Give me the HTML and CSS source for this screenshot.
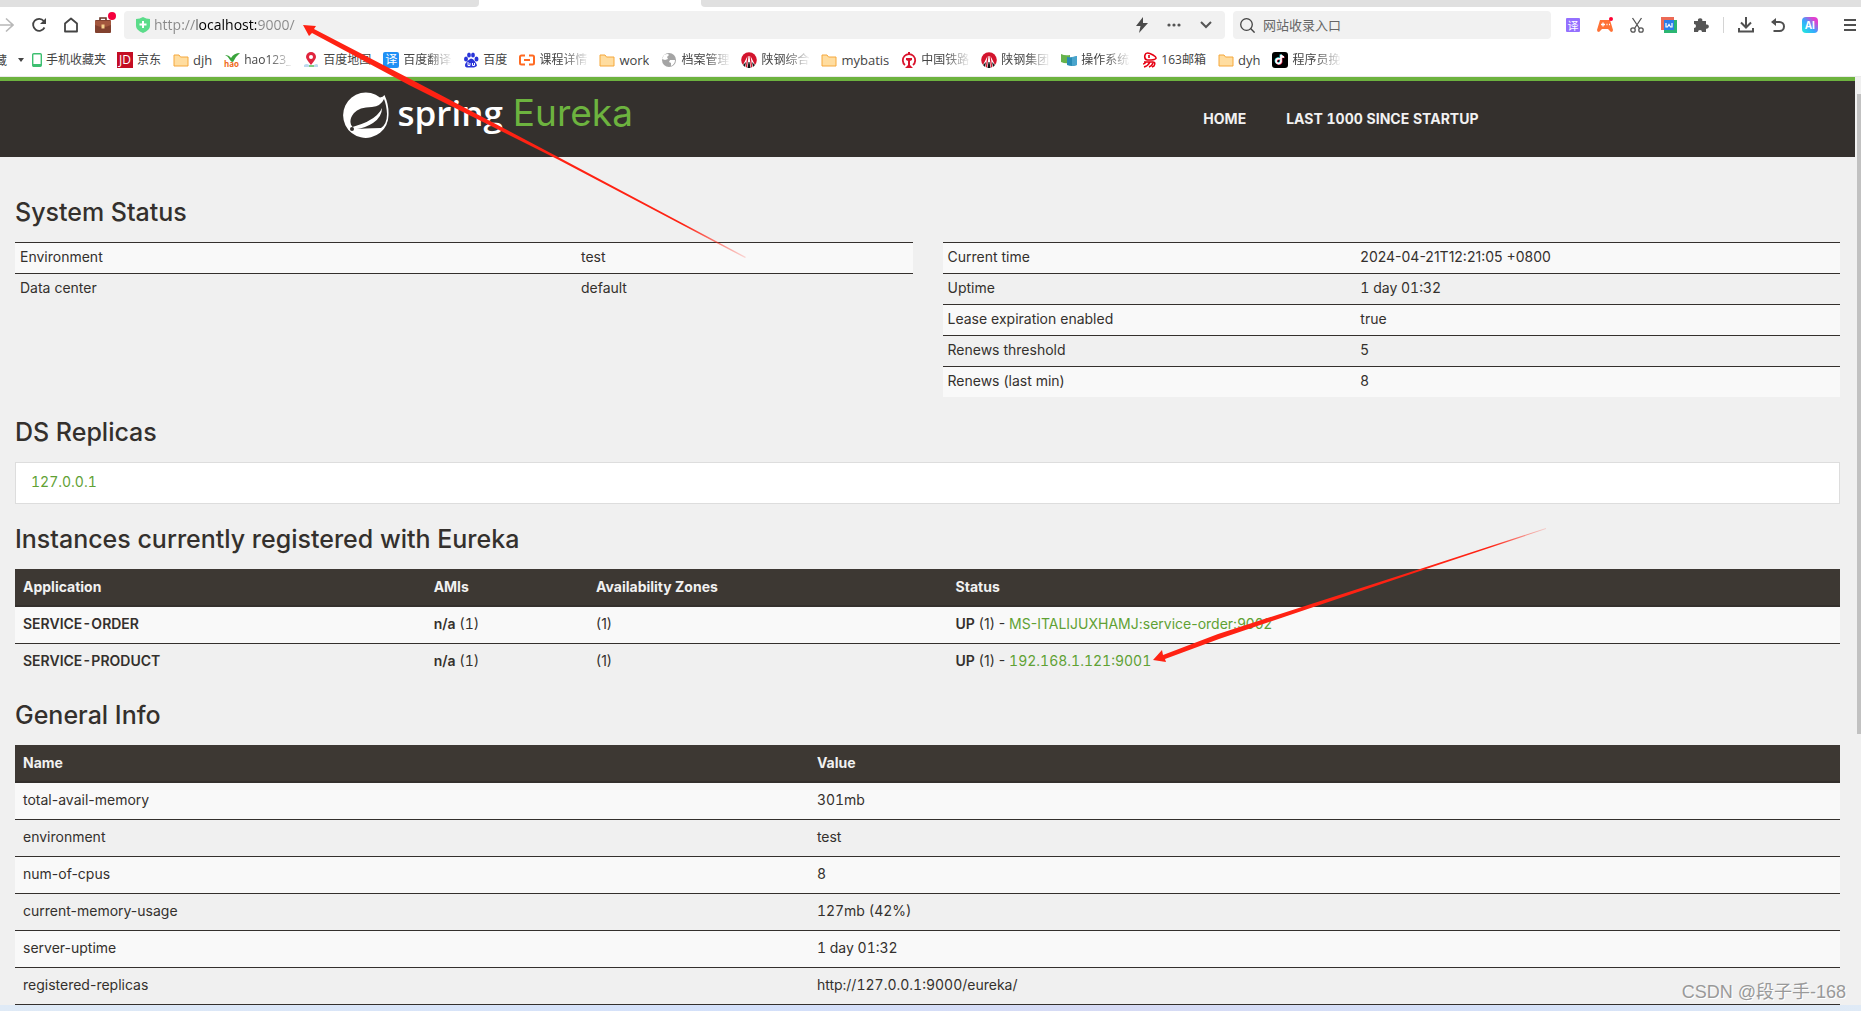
FILE: index.html
```html
<!DOCTYPE html>
<html lang="zh-CN">
<head>
<meta charset="utf-8">
<title>Eureka</title>
<link rel="stylesheet" href="styles.css">
</head>
<body>
<header class="browser">
  <div class="tabs"><span class="tab tab-left"></span><span class="tab tab-active"></span><span class="tab tab-right"></span></div>
  <div class="toolbar">
    <div class="nav-buttons">
      <button class="tool forward" aria-label="Forward"><svg width="14" height="16" viewBox="0 0 14 16"><path d="M0 8h13M6 1.500l7 6.500-7 6.500" fill="none" stroke="#b8b8b8" stroke-width="1.600"/></svg></button>
      <button class="tool" aria-label="Reload"><svg width="16" height="16" viewBox="0 0 16 16"><path d="M13.500 10.500A6 6 0 1 1 12.800 4" fill="none" stroke="#444" stroke-width="1.800"/><path d="M15 1v6H9z" fill="#444"/></svg></button>
      <button class="tool" aria-label="Home"><svg width="16" height="16" viewBox="0 0 16 16"><path d="M2 6.500L8 1.500l6 5v8H2z" fill="none" stroke="#444" stroke-width="1.800" stroke-linejoin="round"/></svg></button>
      <button class="tool badge" aria-label="Toolbox"><svg width="16" height="16" viewBox="0 0 16 16"><path d="M5 4V1h6v3" fill="none" stroke="#693527" stroke-width="1.600"/><rect y="3" width="16" height="13" rx="1" fill="#82412f"/><path d="M0 4h16v4q-8 4-16 0z" fill="#a3573e"/><rect x="6.500" y="7.500" width="3" height="4" fill="#f6d08c"/></svg></button>
    </div>
    <form class="address">
      <svg width="14" height="16" viewBox="0 0 14 16"><path d="M0 2q4 0 7-2 3 2 7 2v7q0 4-7 7-7-3-7-7z" fill="#5bdc8a"/><path d="M7 4v7M3.500 7.500h7" stroke="#fff" stroke-width="2"/></svg>
      <input class="url" type="text" aria-label="Address" value="http://localhost:9000/">
      <button class="tool" type="button" aria-label="Speed mode"><svg width="14" height="16" viewBox="0 0 14 16"><path d="M8 0L1 9h4.500L4 16l9-10H8z" fill="#4a4a4a"/></svg></button>
      <button class="tool" type="button" aria-label="More"><svg width="14" height="4" viewBox="0 0 14 4"><g fill="#555"><circle cx="2" cy="2" r="1.600"/><circle cx="7" cy="2" r="1.600"/><circle cx="12" cy="2" r="1.600"/></g></svg></button>
      <button class="tool" type="button" aria-label="History"><svg width="12" height="8" viewBox="0 0 12 8"><path d="M1 1l5 5 5-5" fill="none" stroke="#555" stroke-width="2"/></svg></button>
    </form>
    <form class="search">
      <svg width="15" height="15" viewBox="0 0 15 15"><circle cx="6.500" cy="6.500" r="5.800" fill="none" stroke="#444" stroke-width="1.300"/><path d="M10.600 10.600l4 4" stroke="#444" stroke-width="1.400"/></svg>
      <input class="query" type="text" aria-label="Search" placeholder="网站收录入口">
    </form>
    <div class="extensions">
      <button class="tool" aria-label="Translate"><span class="ext-translate">译</span></button>
      <button class="tool" aria-label="Games"><svg width="16" height="16" viewBox="0 0 16 16"><path d="M3 3h10l3 10q0 2-2 2l-3-3H5l-3 3q-2 0-2-2z" fill="#ff7236"/><path d="M4 7.500h4M6 5.500v4M9.500 7.500h1M12 7.500h1" stroke="#fff" stroke-width="1.300"/><circle cx="14" cy="2" r="2" fill="#f03"/></svg></button>
      <button class="tool" aria-label="Screenshot"><svg width="14" height="16" viewBox="0 0 14 16"><g fill="none" stroke="#555" stroke-width="1.300"><path d="M2.500 1l7 10.500M11.500 1l-7 10.500"/><circle cx="3" cy="13" r="2.200"/><circle cx="11" cy="13" r="2.200"/></g></svg></button>
      <button class="tool" aria-label="Documents"><svg width="16" height="16" viewBox="0 0 16 16"><path d="M0 0h13v13H0z" fill="#ec6a55"/><path d="M3 3h13v13H3z" fill="#2bb673"/><path d="M3 3h10v10H3z" fill="#2b7de9"/><path d="M5 6v4h1.500L8 7.500 9.500 10H11V6" fill="none" stroke="#fff" stroke-width="1.200"/></svg></button>
      <button class="tool" aria-label="Extensions"><svg width="16" height="16" viewBox="0 0 16 16"><path d="M1 4h4a2.200 2.200 0 1 1 4.300 0H13v3.500a2.200 2.200 0 1 1 0 4.200V15H9a2 2 0 1 0-4 0H1v-4a2 2 0 1 0 0-4z" fill="#555"/></svg></button>
      <span class="divider"></span>
      <button class="tool" aria-label="Downloads"><svg width="16" height="16" viewBox="0 0 16 16"><path d="M8 0v10M3 5.500l5 5 5-5M1 11v3.500h14V11" fill="none" stroke="#505050" stroke-width="2"/></svg></button>
      <button class="tool" aria-label="Undo"><svg width="14" height="14" viewBox="0 0 14 14"><path d="M1 4h7.500a4.300 4.300 0 0 1 0 9H2.500" fill="none" stroke="#505050" stroke-width="2"/><path d="M0 4l5-4v8z" fill="#505050"/></svg></button>
      <button class="tool" aria-label="AI assistant"><span class="ext-ai">AI</span></button>
      <button class="tool menu" aria-label="Menu"><svg width="12" height="12" viewBox="0 0 12 12"><path d="M0 1h12M0 6h12M0 11h12" stroke="#505050" stroke-width="2"/></svg></button>
    </div>
  </div>
  <nav class="bookmarks">
    <button class="favorites"><span class="favorites-label">藏</span><svg width="6" height="4" viewBox="0 0 6 4"><path d="M0 0h6L3 4z" fill="#444"/></svg></button>
    <a class="mark phone" href="#"><svg width="10" height="14" viewBox="0 0 10 14"><rect x=".7" y=".7" width="8.600" height="12.600" rx="1" fill="none" stroke="#3dbf70" stroke-width="1.400"/><path d="M1 11h8v2H1z" fill="#3dbf70"/></svg><span class="name wide">手机收藏夹</span></a>
    <a class="mark" href="#"><span class="ico jd">JD</span><span class="name">京东</span></a>
    <a class="mark" href="#"><svg class="ico" viewBox="0 0 16 16"><path d="M1 3h5l1.500 2H15v9H1z" fill="#ffdda0" stroke="#f5a83c"/></svg><span class="name latin">djh</span></a>
    <a class="mark" href="#"><svg class="ico" viewBox="0 0 16 16"><path d="M1 3q4 0 6 3 3-5 9-5-5 4-7 9-2 0-3-2-2-4-5-5z" fill="#3aa43c"/><text x="0" y="15" class="hao">hao</text></svg><span class="name fade">hao123_</span></a>
    <a class="mark" href="#"><svg class="ico" viewBox="0 0 16 16"><path d="M1 13q3-2 5 0t5 0 4 0v2H1z" fill="#bcd9ee"/><path d="M6 13h5v2H6z" fill="#7ed087"/><path d="M8 13Q3 7 3 5a5 5 0 0 1 10 0q0 2-5 8z" fill="#e0243d"/><circle cx="8" cy="5" r="2" fill="#fff"/></svg><span class="name">百度地图</span></a>
    <a class="mark" href="#"><span class="ico yi">译</span><span class="name fade">百度翻译</span></a>
    <a class="mark" href="#"><svg class="ico" viewBox="0 0 16 16"><g fill="#2a35d8"><ellipse cx="3" cy="7" rx="2" ry="2.500"/><ellipse cx="6" cy="3" rx="1.900" ry="2.500"/><ellipse cx="10" cy="3" rx="1.900" ry="2.500"/><ellipse cx="13.500" cy="7" rx="2" ry="2.500"/><path d="M8 6.500q2 0 4 3t2 4-3 2H5q-3 0-3-2t2-4 4-3z"/></g><path d="M5 10v3.500h2V11M9.500 11v2.500h2V11" fill="none" stroke="#fff"/></svg><span class="name">百度</span></a>
    <a class="mark" href="#"><svg class="ico" viewBox="0 0 16 16"><path d="M6 3.500H2.500Q1 3.500 1 5v6q0 1.500 1.500 1.500H6M10 3.500h3.500Q15 3.500 15 5v6q0 1.500-1.500 1.500H10M5 8h6" fill="none" stroke="#ff6a22" stroke-width="2"/></svg><span class="name fade">课程详情</span></a>
    <a class="mark" href="#"><svg class="ico" viewBox="0 0 16 16"><path d="M1 3h5l1.500 2H15v9H1z" fill="#ffdda0" stroke="#f5a83c"/></svg><span class="name latin">work</span></a>
    <a class="mark" href="#"><svg class="ico" viewBox="0 0 16 16"><circle cx="8" cy="8" r="7" fill="#a4a4a4"/><path d="M3 3q4-2 5 0L6 5l1 2-3 1-3-1zM9 8h5q0 4-4 6V11l-2-1z" fill="#fff"/></svg><span class="name fade">档案管理</span></a>
    <a class="mark" href="#"><svg class="ico" viewBox="0 0 16 16"><circle cx="8" cy="8" r="7.800" fill="#d3142d"/><path d="M6.500 4L1.500 14l3 2zM9.500 4l5 10-3 2zM7.500 4h1l1.500 12H6z" fill="#fff"/><path d="M7.500 10h1l1 6h-3zM5 10l-1 5-2-2zM11 10l1 5 2-2z" fill="#161616"/></svg><span class="name fade">陕钢综合</span></a>
    <a class="mark" href="#"><svg class="ico" viewBox="0 0 16 16"><path d="M1 3h5l1.500 2H15v9H1z" fill="#ffdda0" stroke="#f5a83c"/></svg><span class="name latin">mybatis</span></a>
    <a class="mark" href="#"><svg class="ico" viewBox="0 0 16 16"><path d="M4 13A6.200 6.200 0 1 1 12 13" fill="none" stroke="#d9132c" stroke-width="1.800"/><path d="M5 6h6v2L9 9v4l3 3H4l3-3V9L5 8zM7 0h2v2H7z" fill="#d9132c"/></svg><span class="name fade">中国铁路</span></a>
    <a class="mark" href="#"><svg class="ico" viewBox="0 0 16 16"><circle cx="8" cy="8" r="7.800" fill="#d3142d"/><path d="M6.500 4L1.500 14l3 2zM9.500 4l5 10-3 2zM7.500 4h1l1.500 12H6z" fill="#fff"/><path d="M7.500 10h1l1 6h-3zM5 10l-1 5-2-2zM11 10l1 5 2-2z" fill="#161616"/></svg><span class="name fade">陕钢集团</span></a>
    <a class="mark" href="#"><svg class="ico" viewBox="0 0 16 16"><path d="M0 2q4 2 9 1v8q-5 1-9-1z" fill="#67b34b"/><path d="M6 5q5 1 10-1v9q-5 2-10 0z" fill="#278bb5"/><path d="M11 5l5-1v9l-5 1z" fill="#49a4cc"/></svg><span class="name fade">操作系统</span></a>
    <a class="mark" href="#"><svg class="ico" viewBox="0 0 16 16"><g fill="none" stroke="#e60012" stroke-width="1.600"><path d="M6 8Q3 7 4 3t8 0-2 5H6"/><path d="M8 3v3M3 10h9q3 0 1 4l-2 1M9 10q-2 4-6 5M12 11q-1 3-4 4M5 10q-1 2-3 2"/></g></svg><span class="name">163邮箱</span></a>
    <a class="mark" href="#"><svg class="ico" viewBox="0 0 16 16"><path d="M1 3h5l1.500 2H15v9H1z" fill="#ffdda0" stroke="#f5a83c"/></svg><span class="name latin">dyh</span></a>
    <a class="mark" href="#"><svg class="ico" viewBox="0 0 16 16"><rect width="16" height="16" rx="3" fill="#000"/><g fill="none" stroke-width="1.700"><path d="M8 7a2.500 2.500 0 1 0 1 2.500V3q1 2 3 2" stroke="#25e0e8" transform="translate(-.6 -.4)"/><path d="M8 7a2.500 2.500 0 1 0 1 2.500V3q1 2 3 2" stroke="#f03058" transform="translate(.6 .5)"/><path d="M8 7a2.500 2.500 0 1 0 1 2.500V3q1 2 3 2" stroke="#fff"/></g></svg><span class="name fade">程序员挽</span></a>
  </nav>
</header>

<div class="viewport">
  <div class="page">
    <header class="site-header">
      <div class="container">
        <a class="brand" href="#">
          <svg width="46" height="46" viewBox="0 0 46 46"><path d="M41.500 3Q46 13 45.500 23A22.700 22.700 0 1 1 37 5.500Q40 5 41.500 3z" fill="#fff"/><path d="M41 7q-3 7-12 8-13 0-18 6c-5 6-4 11-1.500 14Q27 30 34 23q4-4 5-7 0 9-9 15-8 5-16 6 18-1 24-1 6-4 6-14Q43.500 13 41 7z" fill="#34302d"/><circle cx="9" cy="37" r="2" fill="#34302d"/></svg>
          <span class="brand-spring">spring</span><span class="brand-eureka">Eureka</span>
        </a>
        <nav class="site-nav"><a href="#">HOME</a><a href="#">LAST 1000 SINCE STARTUP</a></nav>
      </div>
    </header>
    <main class="content">
      <h1>System Status</h1>
      <div class="status">
        <table class="compact left-status">
          <tr><td>Environment</td><td>test</td></tr>
          <tr><td>Data center</td><td>default</td></tr>
        </table>
        <table class="compact right-status">
          <tr><td>Current time</td><td>2024-04-21T12:21:05 +0800</td></tr>
          <tr><td>Uptime</td><td class="num">1 day 01:32</td></tr>
          <tr><td>Lease expiration enabled</td><td>true</td></tr>
          <tr><td>Renews threshold</td><td>5</td></tr>
          <tr><td>Renews (last min)</td><td>8</td></tr>
        </table>
      </div>
      <h1>DS Replicas</h1>
      <ul class="replicas"><li><a class="num" href="#">127.0.0.1</a></li></ul>
      <h1>Instances currently registered with Eureka</h1>
      <table class="data instances">
        <thead><tr><th>Application</th><th>AMIs</th><th>Availability Zones</th><th>Status</th></tr></thead>
        <tbody>
          <tr><td class="num"><b>SERVICE-ORDER</b></td><td class="num"><b>n/a</b> (1)</td><td>(1)</td><td><b>UP</b> (1) - <a href="#">MS-ITALIJUXHAMJ:service-order:9002</a></td></tr>
          <tr><td class="num"><b>SERVICE-PRODUCT</b></td><td class="num"><b>n/a</b> (1)</td><td>(1)</td><td><b>UP</b> (1) - <a class="num" href="#">192.168.1.121:9001</a></td></tr>
        </tbody>
      </table>
      <h1>General Info</h1>
      <table class="data general">
        <thead><tr><th>Name</th><th>Value</th></tr></thead>
        <tbody>
          <tr><td>total-avail-memory</td><td class="num">301mb</td></tr>
          <tr><td>environment</td><td>test</td></tr>
          <tr><td>num-of-cpus</td><td class="num">8</td></tr>
          <tr><td>current-memory-usage</td><td class="num">127mb (42%)</td></tr>
          <tr><td>server-uptime</td><td class="num">1 day 01:32</td></tr>
          <tr><td>registered-replicas</td><td class="num">http://127.0.0.1:9000/eureka/</td></tr>
        </tbody>
      </table>
    </main>
  </div>
  <div class="scrollbar"><div class="thumb"></div></div>
</div>
<footer class="taskbar"></footer>

<svg class="arrows" width="1600" height="700" viewBox="0 0 1600 700">
  <defs>
    <linearGradient id="fade1" gradientUnits="userSpaceOnUse" x1="303" y1="25" x2="750" y2="260"><stop offset=".85" stop-color="#ff2213"/><stop offset="1" stop-color="#ff2213" stop-opacity=".1"/></linearGradient>
    <linearGradient id="fade2" gradientUnits="userSpaceOnUse" x1="1153" y1="660" x2="1550" y2="527"><stop offset=".85" stop-color="#ff2213"/><stop offset="1" stop-color="#ff2213" stop-opacity=".1"/></linearGradient>
  </defs>
  <path d="M303 25L316 26 314 29 416 82 560 158 746 257 745 258 559 160 409 85 312 33 309 36z" fill="url(#fade1)"/>
  <path d="M1153 660L1162 650 1163 655 1218 634 1420 569 1546 528 1546 529 1420 571 1219 639 1165 659 1166 662z" fill="url(#fade2)"/>
</svg>
<div class="watermark">CSDN @段子手-168</div>
</body>
</html>
```

FILE: styles.css
```css
* { box-sizing: border-box; }

body {
  margin: 0;
  position: relative;
  overflow-x: hidden;
  background: #f0f0f0;
  color: #34302d;
  font: 14px/20px Inter, "Noto Sans CJK SC", sans-serif;
}

a { color: #5fa134; text-decoration: none; }
svg { display: block; flex: none; }
.num, .site-nav { font-variant-numeric: tabular-nums; }

/* Browser chrome */
.browser {
  background: #fff;
  border-bottom: 1px solid #eaeaea;
}

.tabs { display: flex; height: 7px; }
.tab { background: #e0e0e0; }
.tab-left { width: 479px; border-radius: 0 0 4px 0; }
.tab-active { width: 222px; background: #fff; }
.tab-right { flex: 1; border-radius: 0 0 0 4px; }

.toolbar {
  display: flex;
  align-items: center;
  height: 36px;
}

.nav-buttons, .extensions { display: flex; align-items: center; }
.nav-buttons { margin-right: 5px; }

.tool {
  position: relative;
  display: flex;
  align-items: center;
  justify-content: center;
  width: 32px;
  height: 28px;
  padding: 0;
  border: 0;
  background: none;
}
.tool.forward { width: 23px; justify-content: flex-start; }
.tool.menu { width: 23px; margin-left: 12px; }
.badge::after {
  content: "";
  position: absolute;
  top: 1px;
  right: 3px;
  width: 8px;
  height: 8px;
  border-radius: 50%;
  background: #f5003d;
}

.address, .search {
  display: flex;
  align-items: center;
  height: 28px;
  border-radius: 4px;
  background: #f1f1f1;
}
.address { flex: 1; padding: 0 3px 0 12px; margin-right: 8px; }
.search { width: 318px; padding-left: 7px; gap: 8px; }

.url, .query {
  flex: 1;
  min-width: 0;
  height: 28px;
  border: 0;
  padding: 0;
  outline: 0;
  background: none;
  font: 14px/28px "Open Sans", "Noto Sans CJK SC", sans-serif;
}
.url {
  margin-left: 4px;
  color: transparent;
  caret-color: #000;
  background: linear-gradient(90deg, #888 43px, #000 43px, #000 102px, #888 102px);
  -webkit-background-clip: text;
  background-clip: text;
}
.query { font-size: 13px; }
.query::placeholder { color: #666; opacity: 1; }

.extensions { padding-left: 6px; }
.divider { width: 1px; height: 16px; margin: 0 6px; background: #d4d4d4; }
.ext-translate {
  width: 14px;
  height: 14px;
  border-radius: 1px;
  background: #9470ff;
  color: #fff;
  font: 11px/14px "Noto Sans CJK SC", sans-serif;
}
.ext-ai {
  width: 16px;
  height: 16px;
  border-radius: 4px;
  background: linear-gradient(45deg, #20f0d8, #35a8ff 45%, #e040d0 80%);
  color: #fff;
  font: bold 10px/16px "Open Sans", sans-serif;
}

.bookmarks {
  display: flex;
  align-items: center;
  gap: 12px;
  height: 33px;
  overflow: hidden;
  font: 12px/18px "Open Sans", "Noto Sans CJK SC", sans-serif;
}
.favorites {
  display: flex;
  align-items: center;
  justify-content: flex-end;
  gap: 11px;
  width: 24px;
  margin-right: -4px;
  padding: 0;
  border: 0;
  background: none;
  color: #444;
  font: 12px/18px "Noto Sans CJK SC", sans-serif;
  white-space: nowrap;
}
.mark { display: flex; align-items: center; gap: 4px; color: #444; white-space: nowrap; }
.mark.phone { margin-right: -1px; }
.name { max-width: 49px; overflow: hidden; }
.name.wide { max-width: 60px; }
.name.latin { font-size: 13px; }
.name.fade {
  -webkit-mask-image: linear-gradient(90deg, #000 24px, transparent 50px);
  mask-image: linear-gradient(90deg, #000 24px, transparent 50px);
}
.ico { flex: none; width: 16px; height: 16px; }
.hao { font: bold 8px "Open Sans", sans-serif; fill: #f06a20; }
.jd, .yi { color: #fff; text-align: center; line-height: 16px; }
.jd { background: #c40d23; }
.yi { border-radius: 2px; background: #2090f5; }

/* Eureka page */
.viewport { display: flex; }
.page { flex: 1; min-width: 0; }

.site-header {
  border-top: 4px solid #6db33f;
  background: #34302d;
}
.container {
  display: flex;
  justify-content: space-between;
  max-width: 1170px;
  height: 76px;
  margin: 0 auto;
}
.brand {
  display: flex;
  align-items: center;
  height: 68px;
  line-height: 48px;
}
.brand-spring {
  margin: 0 10px 4px 9px;
  color: #fff;
  font-family: "Open Sans", sans-serif;
  font-size: 35px;
  font-weight: 600;
}
.brand-eureka { margin-bottom: 4px; color: #6db33f; font-size: 37px; font-weight: 400; }
.site-nav {
  display: flex;
  align-items: center;
  gap: 40px;
  padding-right: 34px;
}
.site-nav a { color: #f1f1f1; font-weight: 700; }

.content { padding: 20px 15px 0; }
h1 {
  margin: 22px 0 17px;
  font-size: 25px;
  line-height: 26px;
  font-weight: 500;
}

table { width: 100%; border-collapse: separate; border-spacing: 0; table-layout: fixed; }
th { text-align: left; }
b { font-weight: 600; }

.status { display: grid; grid-template-columns: 1fr 1fr; gap: 30px; align-items: start; }
.compact td { padding: 4px 5px 6px; border-top: 1px solid #34302d; }
.compact tr:nth-child(odd) td { background: #f9f9f9; }
.left-status td:first-child { width: 62.5%; }
.right-status td:first-child { width: 46%; }

.replicas {
  margin: 0;
  padding: 9px 15px 11px;
  border: 1px solid #ddd;
  background: #fff;
  list-style: none;
}

.data th {
  padding: 8px;
  border-bottom: 2px solid #34302d;
  background: #3d3833;
  color: #f1f1f1;
}
.data td { padding: 7px 8px 9px; }
.data tbody tr:nth-child(odd) td { background: #f9f9f9; }
.data tr + tr td { border-top: 1px solid #34302d; }
.instances th:nth-child(1) { width: 22.5%; }
.instances th:nth-child(2) { width: 8.9%; }
.instances th:nth-child(3) { width: 19.7%; }
.general { border-bottom: 1px solid #34302d; }
.general th:first-child { width: 43.5%; }

.scrollbar { width: 6px; padding: 17px 0 0 2px; background: #f0f0f0; }
.thumb { height: 640px; background: #c1c1c1; }

.taskbar { height: 6px; background: linear-gradient(90deg, #dfeaf6, #d3e0fa 40%, #d6daf4 60%, #d4e0f8 80%, #dfeaf6); }

/* Annotations over the page */
.arrows { position: absolute; top: 0; left: 0; pointer-events: none; }
.watermark {
  position: absolute;
  right: 15px;
  bottom: 6px;
  color: #999;
  font: 18px/26px "Liberation Sans", "Noto Sans CJK SC", sans-serif;
  text-shadow: 1px 1px 0 #fff;
}
```
